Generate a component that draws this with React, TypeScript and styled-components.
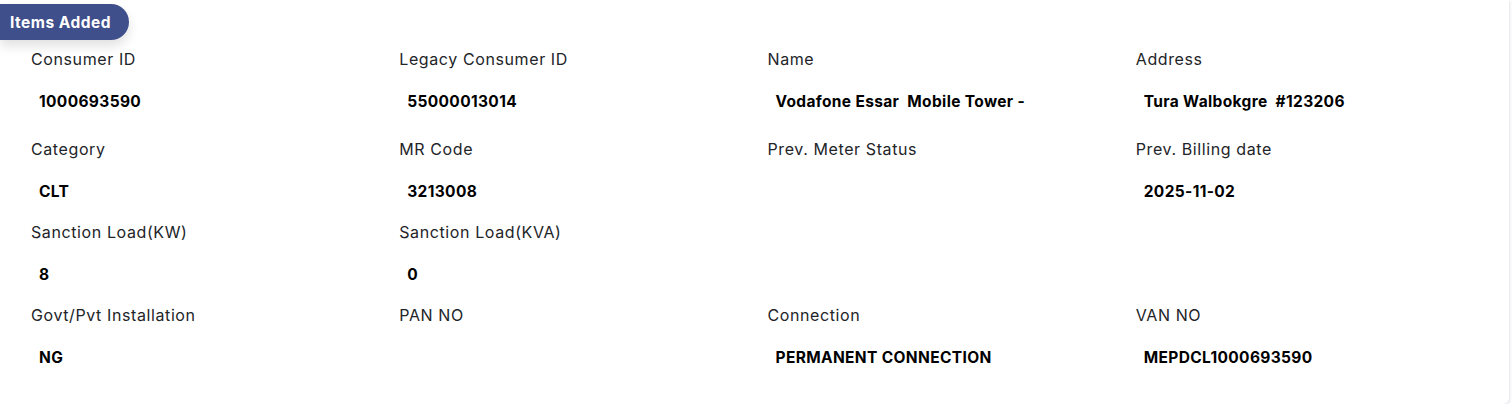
import styled, { createGlobalStyle } from 'styled-components';

const GlobalStyle = createGlobalStyle`
  html, body {
    margin: 0;
    padding: 0;
    background: #ffffff;
    font-family: Inter, 'Noto Sans', sans-serif;
  }
`;

const Card = styled.div`
  width: 1509px;
  height: 404px;
  box-sizing: border-box;
  background: #ffffff;
  border-radius: 0 0 6px 0;
  box-shadow: 1px 1px 3px rgba(60, 60, 110, 0.15);
  padding-top: 4px;
`;

const Badge = styled.div`
  display: inline-flex;
  align-items: center;
  height: 36px;
  padding: 0 18px 0 10px;
  background: #3f4f8b;
  color: #ffffff;
  font-size: 15.5px;
  font-weight: 700;
  letter-spacing: 0.5px;
  border-radius: 0 18px 18px 0;
  box-shadow: 0 6px 12px rgba(0, 0, 0, 0.12);
`;

const Grid = styled.div`
  display: grid;
  grid-template-columns: repeat(4, 1fr);
  row-gap: 18px;
  padding: 8px 5px 0 31px;
`;

const Field = styled.div<{ $first?: boolean }>`
  display: flex;
  flex-direction: column;
  gap: 21px;
  margin-bottom: ${(p) => (p.$first ? '7px' : '0')};
`;

const Label = styled.span`
  font-size: 16px;
  line-height: 22px;
  letter-spacing: 0.6px;
  color: #222428;
  min-height: 22px;
`;

const Value = styled.span`
  font-size: 15.5px;
  line-height: 22px;
  font-weight: 700;
  letter-spacing: 0.35px;
  color: #000000;
  padding-left: 8px;
  white-space: pre;
  min-height: 22px;
`;

const fields: [string, string][] = [
  ['Consumer ID', '1000693590'],
  ['Legacy Consumer ID', '55000013014'],
  ['Name', 'Vodafone Essar  Mobile Tower -'],
  ['Address', 'Tura Walbokgre  #123206'],
  ['Category', 'CLT'],
  ['MR Code', '3213008'],
  ['Prev. Meter Status', ''],
  ['Prev. Billing date', '2025-11-02'],
  ['Sanction Load(KW)', '8'],
  ['Sanction Load(KVA)', '0'],
  ['', ''],
  ['', ''],
  ['Govt/Pvt Installation', 'NG'],
  ['PAN NO', ''],
  ['Connection', 'PERMANENT CONNECTION'],
  ['VAN NO', 'MEPDCL1000693590'],
];

export default function App() {
  return (
    <>
      <GlobalStyle />
      <Card>
        <Badge>Items Added</Badge>
        <Grid>
          {fields.map(([label, value], i) => (
            <Field key={i} $first={i < 4}>
              <Label>{label}</Label>
              <Value>{value}</Value>
            </Field>
          ))}
        </Grid>
      </Card>
    </>
  );
}
